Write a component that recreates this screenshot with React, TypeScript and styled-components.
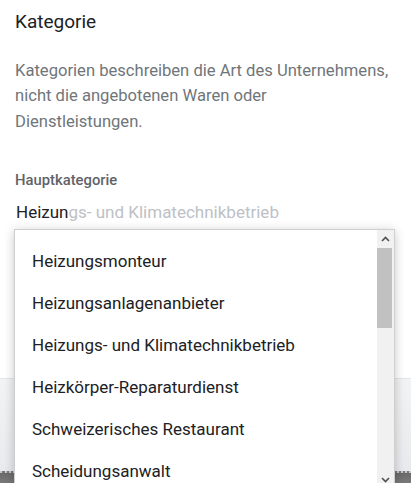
import React from "react";
import styled, { createGlobalStyle } from "styled-components";

const Global = createGlobalStyle`
  html, body { margin: 0; padding: 0; background: #fff; }
  body { width: 411px; height: 483px; overflow: hidden; font-family: Roboto, "Liberation Sans", Arial, sans-serif; }
  #root { position: relative; width: 411px; height: 483px; }
`;

const Page = styled.div`
  position: relative;
  width: 411px;
  height: 483px;
  display: flex;
  flex-direction: column;
  overflow: hidden;
`;

const Content = styled.div`
  padding: 10px 15px 0 15px;
  display: flex;
  flex-direction: column;
  height: 368px;
`;

const Title = styled.h2`
  margin: 0;
  font-size: 19px;
  line-height: 24px;
  font-weight: 400;
  color: #202124;
`;

const Description = styled.p`
  margin: 23.5px 0 0 0;
  font-size: 16.6px;
  line-height: 25.5px;
  color: #70757a;
  width: 385px;
  white-space: nowrap;
`;

const Label = styled.div`
  margin-top: 36px;
  font-size: 14.8px;
  line-height: 20px;
  font-weight: 500;
  color: #5f6368;
`;

const InputLine = styled.div`
  margin-top: 10px;
  font-size: 17px;
  line-height: 24px;
  color: #202124;
  padding-left: 1px;
`;

const Hint = styled.span`
  color: #bdc1c6;
`;

const FooterBand = styled.div`
  height: 92px;
  background: linear-gradient(to bottom, #f1f3f4 0%, #e8eaed 100%);
  border-top: 1px solid #e3e5e8;
`;

const DarkStrip = styled.div`
  flex: 1;
  background: linear-gradient(to bottom, #6a6a6a, #7a7a7a);
  border-top: 2px dotted #c8c8c8;
`;

const Dropdown = styled.div`
  position: absolute;
  top: 229px;
  left: 14px;
  width: 381px;
  height: 260px;
  box-sizing: border-box;
  background: #fff;
  border: 1px solid #cfcfcf;
  box-shadow: 0 2px 10px rgba(0, 0, 0, 0.22);
  display: flex;
`;

const List = styled.ul`
  list-style: none;
  margin: 0;
  padding: 10px 0 0 0;
  flex: 1;
  overflow: hidden;
`;

const Item = styled.li`
  height: 42px;
  line-height: 42px;
  padding-left: 17px;
  font-size: 17px;
  color: #202124;
  white-space: nowrap;
`;

const Scrollbar = styled.div`
  width: 17px;
  background: #f1f1f1;
  display: flex;
  flex-direction: column;
`;

const Arrow = styled.div`
  height: 17px;
  display: flex;
  align-items: center;
  justify-content: center;
`;

const Track = styled.div`
  flex: 1;
  padding: 1px 2px 0 0;
`;

const Thumb = styled.div`
  height: 80px;
  background: #c1c1c1;
`;

const Chevron = ({ up }: { up?: boolean }) => (
  <svg width="9" height="6" viewBox="0 0 9 6">
    <path
      d={up ? "M1 5 L4.5 1.5 L8 5" : "M1 1 L4.5 4.5 L8 1"}
      fill="none"
      stroke="#505050"
      strokeWidth="1.6"
    />
  </svg>
);

const items = [
  "Heizungsmonteur",
  "Heizungsanlagenanbieter",
  "Heizungs- und Klimatechnikbetrieb",
  "Heizkörper-Reparaturdienst",
  "Schweizerisches Restaurant",
  "Scheidungsanwalt",
];

export default function App() {
  return (
    <>
      <Global />
      <Page>
        <Content>
          <Title>Kategorie</Title>
          <Description>
            Kategorien beschreiben die Art des Unternehmens,
            <br />
            nicht die angebotenen Waren oder
            <br />
            Dienstleistungen.
          </Description>
          <Label>Hauptkategorie</Label>
          <InputLine>
            Heizun<Hint>gs- und Klimatechnikbetrieb</Hint>
          </InputLine>
        </Content>
        <FooterBand />
        <DarkStrip />
        <Dropdown>
          <List>
            {items.map((t) => (
              <Item key={t}>{t}</Item>
            ))}
          </List>
          <Scrollbar>
            <Arrow>
              <Chevron up />
            </Arrow>
            <Track>
              <Thumb />
            </Track>
            <Arrow>
              <Chevron />
            </Arrow>
          </Scrollbar>
        </Dropdown>
      </Page>
    </>
  );
}
